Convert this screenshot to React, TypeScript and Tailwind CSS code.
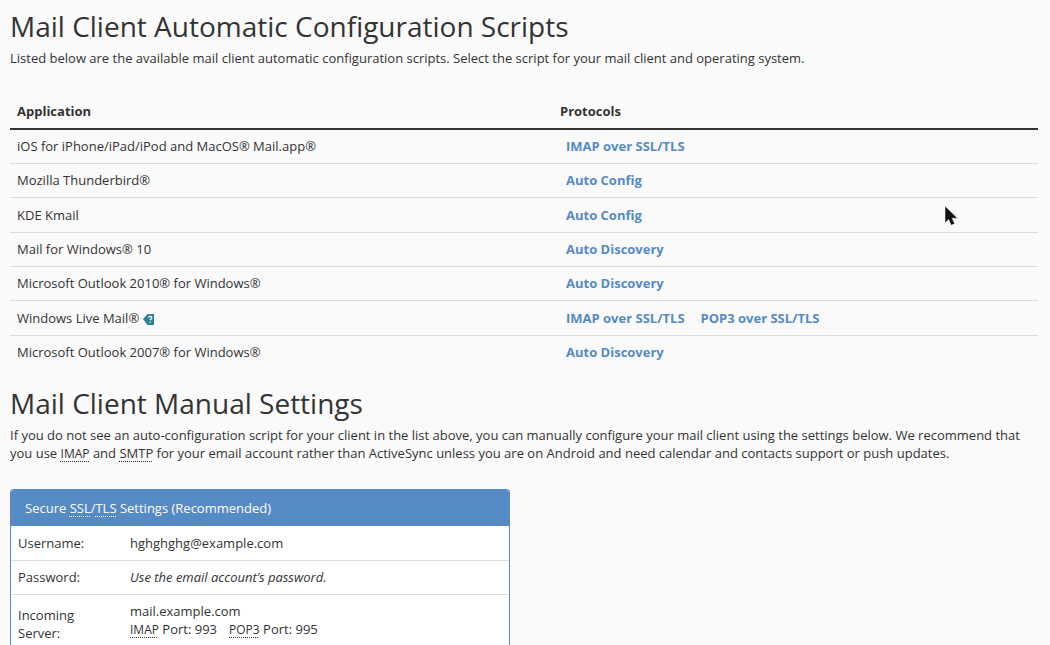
import { ReactNode } from "react";

type Script = {
  app: string;
  protocols: string[];
  help?: boolean;
};

const scripts: Script[] = [
  {
    app: "iOS for iPhone/iPad/iPod and MacOS® Mail.app®",
    protocols: ["IMAP over SSL/TLS"],
  },
  { app: "Mozilla Thunderbird®", protocols: ["Auto Config"] },
  { app: "KDE Kmail", protocols: ["Auto Config"] },
  { app: "Mail for Windows® 10", protocols: ["Auto Discovery"] },
  {
    app: "Microsoft Outlook 2010® for Windows®",
    protocols: ["Auto Discovery"],
  },
  {
    app: "Windows Live Mail®",
    protocols: ["IMAP over SSL/TLS", "POP3 over SSL/TLS"],
    help: true,
  },
  {
    app: "Microsoft Outlook 2007® for Windows®",
    protocols: ["Auto Discovery"],
  },
];

function Abbr({
  title,
  small,
  children,
}: {
  title: string;
  small?: boolean;
  children: ReactNode;
}) {
  return (
    <abbr
      title={title}
      className={`cursor-help underline decoration-dotted decoration-1 underline-offset-3 ${small ? "text-[12px]" : ""}`}
    >
      {children}
    </abbr>
  );
}

function HelpIcon() {
  return (
    <svg
      viewBox="0 0 12 12"
      className="ml-1 inline-block h-3 w-3"
      role="img"
      aria-label="Help"
    >
      <path d="M0 6 4.5 1H11v11H4.5z" fill="#2b8294" />
      <path
        d="M5.4 4.6c.2-1.6 3.6-1.6 3.4.3 0 1.1-1.6 1.1-1.6 2.4M7.2 8.4v1.4"
        fill="none"
        stroke="#fff"
        strokeWidth="1.2"
      />
    </svg>
  );
}

function Cursor() {
  return (
    <svg
      viewBox="0 0 14 22"
      className="pointer-events-none absolute top-[205px] left-[944px] h-[22px] w-[14px]"
      aria-hidden="true"
    >
      <path
        d="M1 1v17l3.7-3.5 2.4 5.8 3.6-1.5-2.5-5.6H13.6z"
        fill="#111"
        stroke="#fff"
        strokeWidth="0.5"
      />
    </svg>
  );
}

function SettingsRow({
  label,
  children,
}: {
  label: string;
  children: ReactNode;
}) {
  return (
    <tr className="h-[34px] border-b border-[#ddd] last:border-b-0">
      <th
        scope="row"
        className="w-[111px] py-[7px] pr-7 pl-[7px] text-left font-normal"
      >
        {label}
      </th>
      <td className="px-2 py-[7px]">{children}</td>
    </tr>
  );
}

export default function App() {
  return (
    <main className="relative min-h-screen bg-[#fafafa] px-[10px] pt-2 font-['Open_Sans',sans-serif] text-[13px] leading-[18px] text-[#333]">
      <section className="pr-[2px]">
        <h1 className="text-[28px] leading-9 font-medium">
          Mail Client Automatic Configuration Scripts
        </h1>
        <p className="mt-[5px]">
          Listed below are the available mail client automatic configuration
          scripts. Select the script for your mail client and operating system.
        </p>

        <table className="mt-[27px] w-full table-fixed border-collapse">
          <thead>
            <tr className="border-b-2 border-[#333] text-left">
              <th className="w-[543px] px-[7px] py-2 font-bold">Application</th>
              <th className="px-[7px] py-2 font-bold">Protocols</th>
            </tr>
          </thead>
          <tbody>
            {scripts.map(({ app, protocols, help }) => (
              <tr
                key={app}
                className="h-[34px] border-b border-[#ddd] last:border-b-0 nth-[3n]:h-[35px]"
              >
                <td className="px-[7px]">
                  {app}
                  {help && <HelpIcon />}
                </td>
                <td className="px-[13px]">
                  <div className="flex gap-4">
                    {protocols.map((protocol) => (
                      <a
                        key={protocol}
                        href="#"
                        className="font-bold text-[#558ac5] hover:underline"
                      >
                        {protocol}
                      </a>
                    ))}
                  </div>
                </td>
              </tr>
            ))}
          </tbody>
        </table>
      </section>

      <section className="mt-4">
        <h1 className="text-[28px] leading-9 font-medium">
          Mail Client Manual Settings
        </h1>
        <p className="mt-[5px]">
          If you do not see an auto-configuration script for your client in the
          list above, you can manually configure your mail client using the
          settings below. We recommend that you use{" "}
          <Abbr title="Internet Message Access Protocol" small>
            IMAP
          </Abbr>{" "}
          and <Abbr title="Simple Mail Transfer Protocol">SMTP</Abbr> for your
          email account rather than ActiveSync unless you are on Android and
          need calendar and contacts support or push updates.
        </p>

        <div className="mt-[26px] max-w-[500px] overflow-hidden rounded-t border border-b-0 border-[#558ac5] bg-white">
          <h2 className="bg-[#558ac5] px-[14px] py-[9px] font-medium text-white">
            Secure <Abbr title="Secure Sockets Layer">SSL</Abbr>/
            <Abbr title="Transport Layer Security">TLS</Abbr> Settings
            (Recommended)
          </h2>
          <table className="w-full table-fixed border-collapse">
            <tbody>
              <SettingsRow label="Username:">hghghghg@example.com</SettingsRow>
              <SettingsRow label="Password:">
                <em>Use the email account’s password.</em>
              </SettingsRow>
              <SettingsRow label="Incoming Server:">
                <div>mail.example.com</div>
                <ul className="mb-2 flex gap-3">
                  <li>
                    <Abbr title="Internet Message Access Protocol" small>
                      IMAP
                    </Abbr>{" "}
                    Port: 993
                  </li>
                  <li>
                    <Abbr title="Post Office Protocol 3" small>
                      POP3
                    </Abbr>{" "}
                    Port: 995
                  </li>
                </ul>
              </SettingsRow>
            </tbody>
          </table>
        </div>
      </section>

      <Cursor />
    </main>
  );
}
